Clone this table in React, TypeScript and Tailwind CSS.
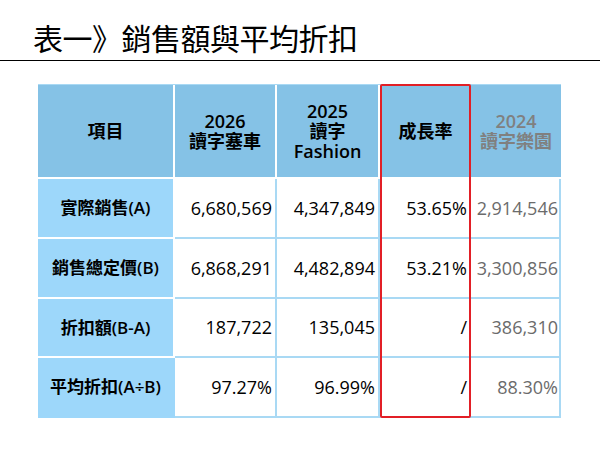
import React from 'react';

const font = { fontFamily: '"Open Sans", "Noto Sans CJK TC", sans-serif' };

const rows = [
    { label: '實際銷售(A)', a: '6,680,569', b: '4,347,849', g: '53.65%', c: '2,914,546' },
    { label: '銷售總定價(B)', a: '6,868,291', b: '4,482,894', g: '53.21%', c: '3,300,856' },
    { label: '折扣額(B-A)', a: '187,722', b: '135,045', g: '/', c: '386,310' },
    { label: '平均折扣(A÷B)', a: '97.27%', b: '96.99%', g: '/', c: '88.30%' },
];

export default function App() {
    return (
        <div className="w-[600px] h-[450px] bg-white overflow-hidden" style={font}>
            {/* Title */}
            <div className="pt-[24px] pb-[6px] pl-[33px] border-b-[1.5px] border-black">
                <h1 className="text-[30px] leading-[30px] font-normal text-black tracking-[-0.5px]">
                    表一》銷售額與平均折扣
                </h1>
            </div>

            {/* Table */}
            <div className="ml-[38px] mt-[23px] relative w-[523px]">
                <div className="grid grid-cols-[137px_102px_103px_91px_90px] grid-rows-[94px_60px_60px_59px_60px] border-t border-r-2 border-[#a9d9f4]">
                    <div className="bg-[#85c2e6] border-r-2 border-b-2 border-white flex items-center justify-center text-[18px] font-semibold text-black">
                        項目
                    </div>
                    <div className="bg-[#85c2e6] border-r-2 border-b-2 border-white flex items-center justify-center">
                        <p className="text-center text-[18px] font-semibold text-black leading-[20px]">
                            2026<br />讀字塞車
                        </p>
                    </div>
                    <div className="bg-[#85c2e6] border-r-2 border-b-2 border-white flex items-center justify-center">
                        <p className="text-center text-[18px] font-semibold text-black leading-[20px]">
                            2025<br />讀字<br />Fashion
                        </p>
                    </div>
                    <div className="bg-[#85c2e6] border-b-2 border-white flex items-center justify-center text-[18px] font-semibold text-black">
                        成長率
                    </div>
                    <div className="bg-[#85c2e6] border-b-2 border-white flex items-center justify-center">
                        <p className="text-center text-[18px] font-semibold text-[#808080] leading-[20px]">
                            2024<br />讀字樂園
                        </p>
                    </div>

                    {rows.map((r, i) => {
                        const last = i === rows.length - 1;
                        return (
                            <React.Fragment key={r.label}>
                                <div className={`bg-[#9dd7fa] border-r-2 border-b-2 ${last ? 'border-[#9dd7fa]' : 'border-white'} flex items-center justify-center text-[17px] font-semibold text-black`}>
                                    {r.label}
                                </div>
                                <div className="border-r-2 border-b-2 border-[#a9d9f4] flex items-center justify-end pr-[3px] text-[18px] text-black">
                                    {r.a}
                                </div>
                                <div className="border-r-2 border-b-2 border-[#a9d9f4] flex items-center justify-end pr-[3px] text-[18px] text-black">
                                    {r.b}
                                </div>
                                <div className="border-b-2 border-[#a9d9f4] flex items-center justify-end pr-[4px] text-[18px] text-black">
                                    {r.g}
                                </div>
                                <div className="border-b-2 border-[#a9d9f4] flex items-center justify-end pr-[3px] text-[18px] text-[#6b6b6b]">
                                    {r.c}
                                </div>
                            </React.Fragment>
                        );
                    })}
                </div>
                {/* Highlight on growth column */}
                <div className="absolute top-0 left-[342px] w-[91px] h-[334px] border-2 border-[#e21f26] rounded-[2px] pointer-events-none" />
            </div>
        </div>
    );
}
